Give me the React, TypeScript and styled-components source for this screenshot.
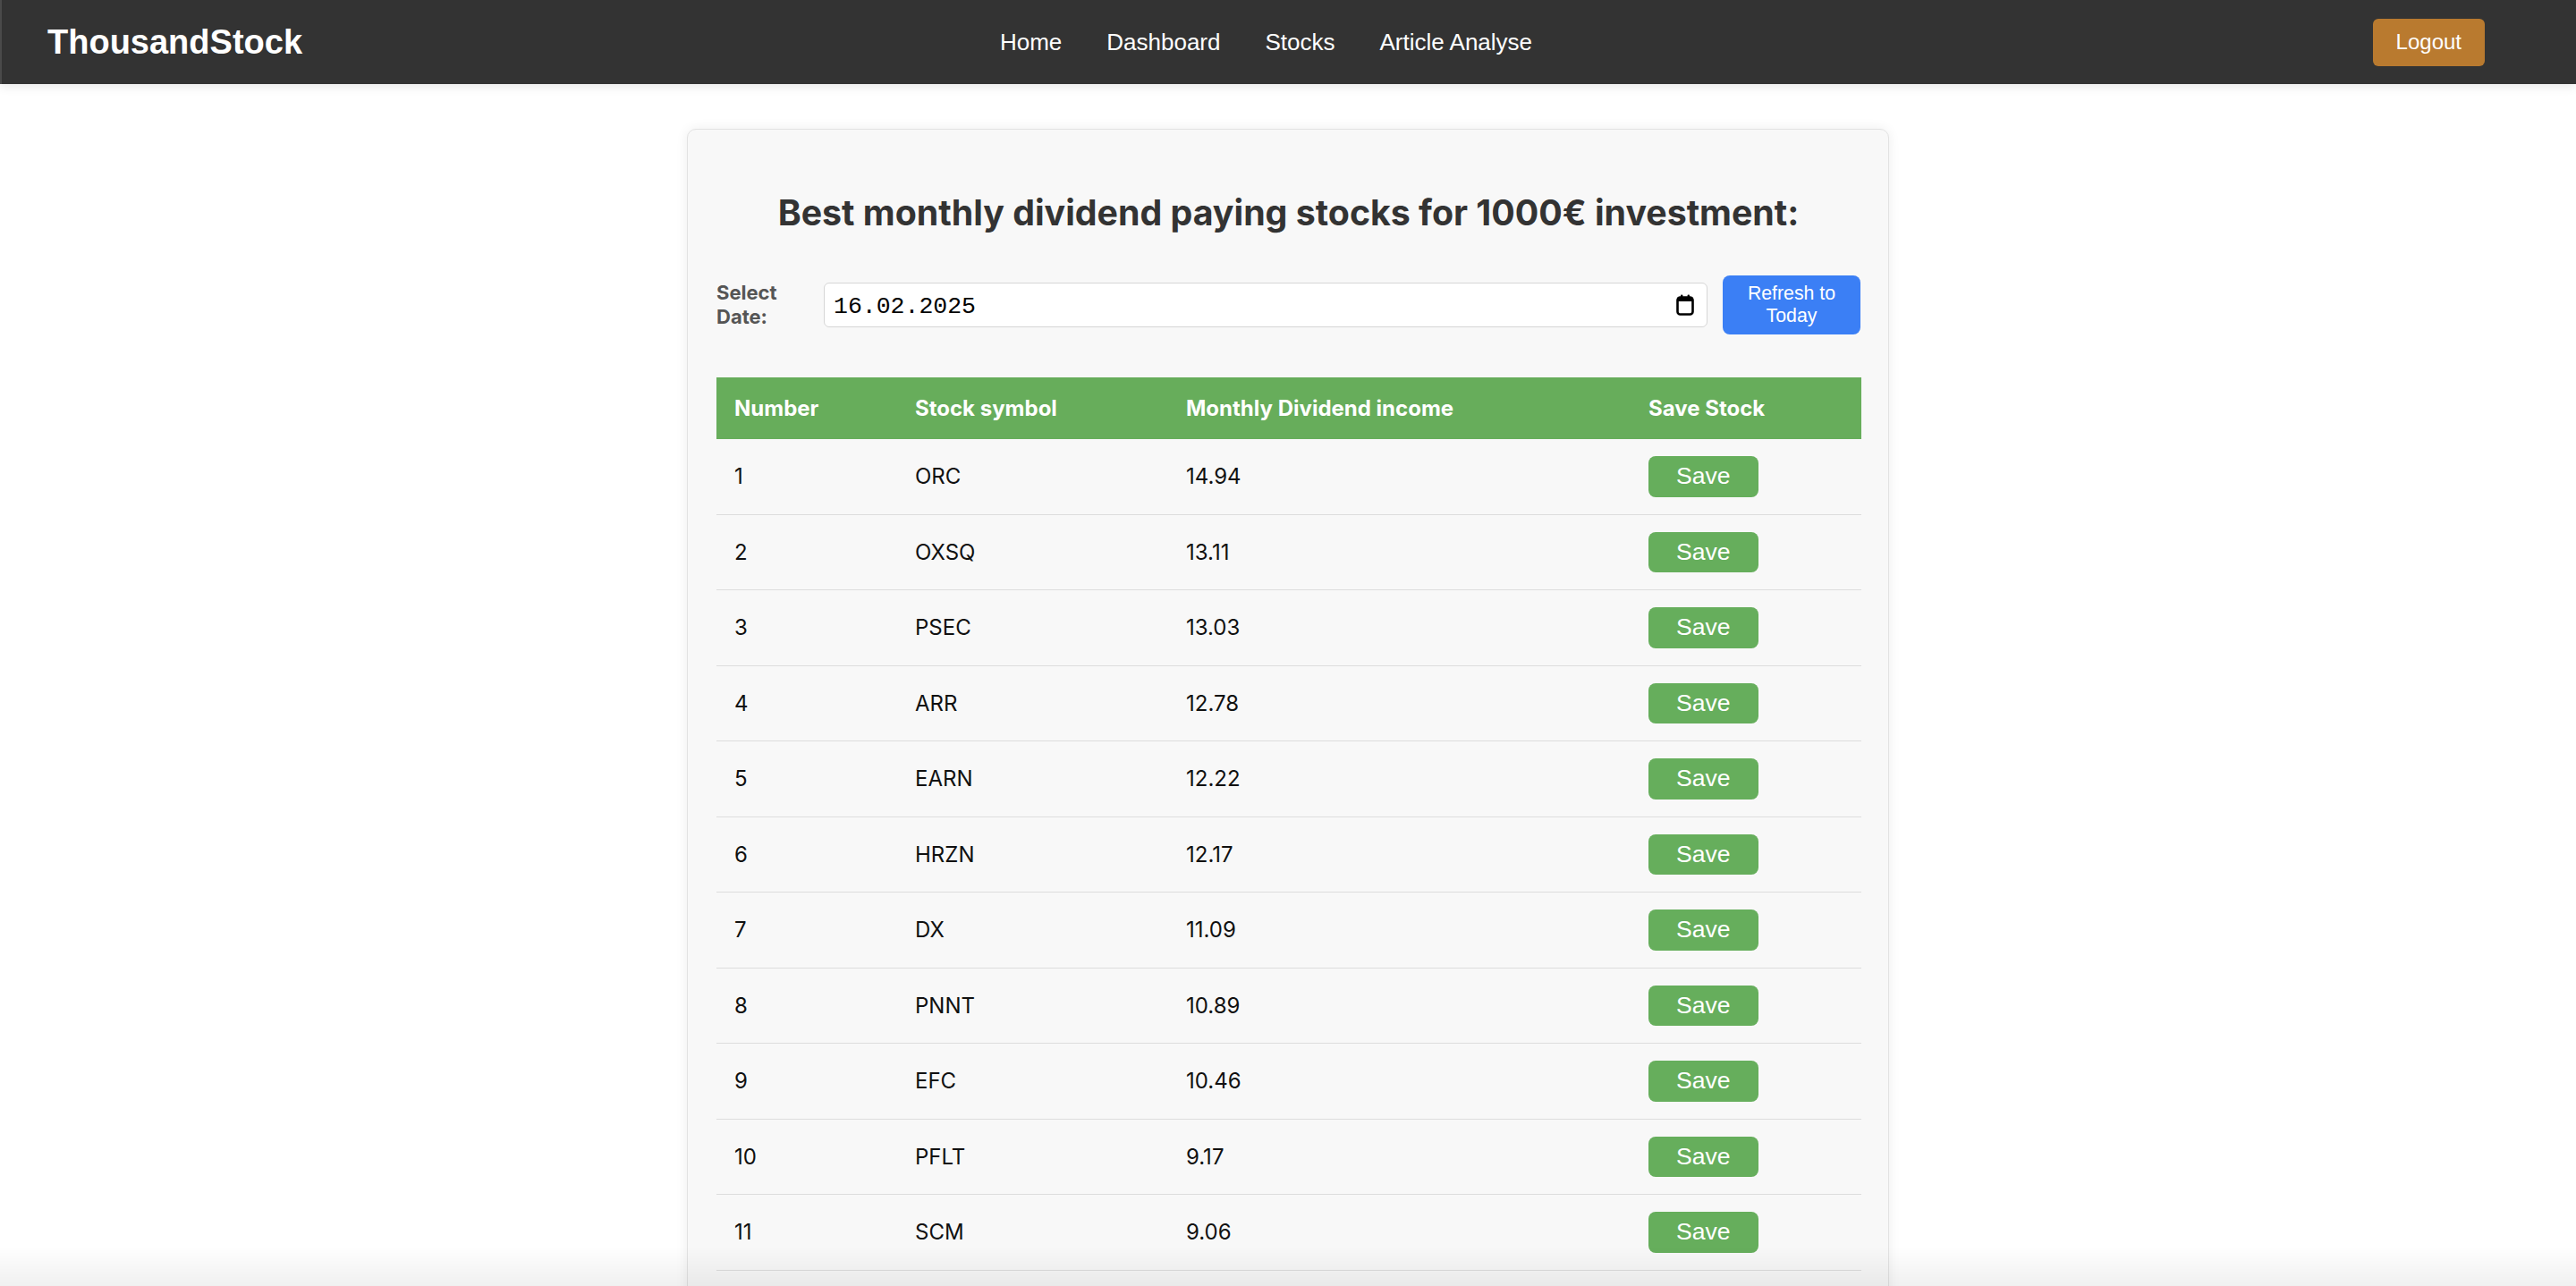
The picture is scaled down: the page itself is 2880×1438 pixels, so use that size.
import React, { useState } from 'react';
import styled, { createGlobalStyle } from 'styled-components';

const GlobalStyle = createGlobalStyle`
  body {
    margin: 0;
    background: #ffffff;
    font-family: 'Liberation Sans', Arial, sans-serif;
  }
`;

interface StockRow {
  symbol: string;
  income: string;
}

const stocks: StockRow[] = [
  { symbol: 'ORC', income: '14.94' },
  { symbol: 'OXSQ', income: '13.11' },
  { symbol: 'PSEC', income: '13.03' },
  { symbol: 'ARR', income: '12.78' },
  { symbol: 'EARN', income: '12.22' },
  { symbol: 'HRZN', income: '12.17' },
  { symbol: 'DX', income: '11.09' },
  { symbol: 'PNNT', income: '10.89' },
  { symbol: 'EFC', income: '10.46' },
  { symbol: 'PFLT', income: '9.17' },
  { symbol: 'SCM', income: '9.06' },
];

const CalendarIcon = () => (
  <svg width="20" height="24" viewBox="0 0 20 24" fill="none">
    <rect x="5" y="0.5" width="2.4" height="4" rx="1" fill="#000" />
    <rect x="12.6" y="0.5" width="2.4" height="4" rx="1" fill="#000" />
    <rect x="1.5" y="3.5" width="17" height="19" rx="3" stroke="#000" strokeWidth="2.6" />
    <rect x="1.5" y="3.5" width="17" height="4.5" fill="#000" />
  </svg>
);

const App: React.FC = () => {
  const [date, setDate] = useState('16.02.2025');

  return (
    <>
      <GlobalStyle />
      <Navbar>
        <Logo>ThousandStock</Logo>
        <NavLinks>
          <NavLink>Home</NavLink>
          <NavLink>Dashboard</NavLink>
          <NavLink>Stocks</NavLink>
          <NavLink>Article Analyse</NavLink>
        </NavLinks>
        <LogoutArea>
          <LogoutButton>Logout</LogoutButton>
        </LogoutArea>
      </Navbar>

      <Main>
        <Card>
          <Title>Best monthly dividend paying stocks for 1000€ investment:</Title>

          <DateRow>
            <DateLabel>Select Date:</DateLabel>
            <DateField>
              <DateInput value={date} onChange={e => setDate(e.target.value)} />
              <CalendarIcon />
            </DateField>
            <RefreshButton onClick={() => setDate('16.02.2025')}>Refresh to Today</RefreshButton>
          </DateRow>

          <StockTable>
            <thead>
              <tr>
                <HeadCell width={202}>Number</HeadCell>
                <HeadCell width={303}>Stock symbol</HeadCell>
                <HeadCell width={517}>Monthly Dividend income</HeadCell>
                <HeadCell width={258}>Save Stock</HeadCell>
              </tr>
            </thead>
            <tbody>
              {stocks.map((s, i) => (
                <tr key={s.symbol}>
                  <Cell>{i + 1}</Cell>
                  <Cell>{s.symbol}</Cell>
                  <Cell>{s.income}</Cell>
                  <Cell>
                    <SaveButton>Save</SaveButton>
                  </Cell>
                </tr>
              ))}
            </tbody>
          </StockTable>
        </Card>
      </Main>
      <BottomFade />
    </>
  );
};

export default App;

const Navbar = styled.header`
  display: grid;
  grid-template-columns: 1fr auto 1fr;
  align-items: center;
  height: 94px;
  padding: 0 102px 0 51px;
  background: #333333;
  border-left: 2px solid #4a4a4a;
  box-shadow: 0 4px 10px rgba(0, 0, 0, 0.08);
  position: relative;
  z-index: 1;
`;

const Logo = styled.div`
  font-family: 'Liberation Sans', Arial, sans-serif;
  font-weight: 700;
  font-size: 38px;
  color: #ffffff;
`;

const NavLinks = styled.nav`
  display: flex;
  gap: 50px;
`;

const NavLink = styled.a`
  font-family: 'Liberation Sans', Arial, sans-serif;
  font-size: 26px;
  color: #ffffff;
  cursor: pointer;
`;

const LogoutArea = styled.div`
  display: flex;
  justify-content: flex-end;
`;

const LogoutButton = styled.button`
  height: 53px;
  padding: 0 26px;
  border: none;
  border-radius: 6px;
  background: #b97a2f;
  color: #ffffff;
  font-family: 'Liberation Sans', Arial, sans-serif;
  font-size: 24px;
  cursor: pointer;
`;

const Main = styled.main`
  display: flex;
  justify-content: center;
  padding-top: 50px;
`;

const Card = styled.section`
  width: 1344px;
  box-sizing: border-box;
  padding: 32px 31px 40px 32px;
  background: #f8f8f8;
  border: 1px solid #e2e2e2;
  border-radius: 10px;
  box-shadow: 0 0 14px rgba(0, 0, 0, 0.07);
  font-family: Inter, 'Noto Sans', sans-serif;
`;

const Title = styled.h2`
  margin: 37px 0 47px;
  text-align: center;
  font-size: 39.3px;
  font-weight: 700;
  color: #333333;
`;

const DateRow = styled.div`
  display: flex;
  align-items: center;
  margin-bottom: 48px;
`;

const DateLabel = styled.label`
  width: 100px;
  margin-right: 20px;
  font-size: 22px;
  font-weight: 700;
  line-height: 27px;
  color: #555555;
`;

const DateField = styled.div`
  flex: 1;
  display: flex;
  align-items: center;
  height: 50px;
  box-sizing: border-box;
  padding: 0 14px 0 10px;
  background: #ffffff;
  border: 1px solid #d6d6d6;
  border-radius: 6px;
`;

const DateInput = styled.input`
  flex: 1;
  border: none;
  outline: none;
  background: transparent;
  padding: 3px 0 0;
  font-family: 'Liberation Mono', 'DejaVu Sans Mono', monospace;
  font-size: 26.5px;
  color: #000000;
`;

const RefreshButton = styled.button`
  width: 154px;
  height: 66px;
  margin-left: 17px;
  padding: 0 20px;
  border: none;
  border-radius: 8px;
  background: #3b7ff5;
  color: #ffffff;
  font-family: 'Liberation Sans', Arial, sans-serif;
  font-size: 21.3px;
  line-height: 25px;
  cursor: pointer;
`;

const StockTable = styled.table`
  width: 1280px;
  border-collapse: collapse;
  table-layout: fixed;
`;

const HeadCell = styled.th<{ width: number }>`
  box-sizing: border-box;
  width: ${p => p.width}px;
  padding: 20px;
  background: #67ad5b;
  color: #ffffff;
  font-size: 24px;
  font-weight: 700;
  line-height: 29px;
  text-align: left;
`;

const Cell = styled.td`
  padding: 19px 20px;
  border-bottom: 1px solid #dddddd;
  font-size: 24px;
  color: #111111;
  vertical-align: middle;
`;

const SaveButton = styled.button`
  height: 45.5px;
  padding: 0 31px;
  border: none;
  border-radius: 8px;
  background: #66ae5c;
  color: #ffffff;
  font-family: 'Liberation Sans', Arial, sans-serif;
  font-size: 26.6px;
  cursor: pointer;
  display: block;
`;

const BottomFade = styled.div`
  position: fixed;
  left: 0;
  right: 0;
  bottom: 0;
  height: 44px;
  background: linear-gradient(to bottom, rgba(0, 0, 0, 0), rgba(0, 0, 0, 0.06));
  pointer-events: none;
`;
